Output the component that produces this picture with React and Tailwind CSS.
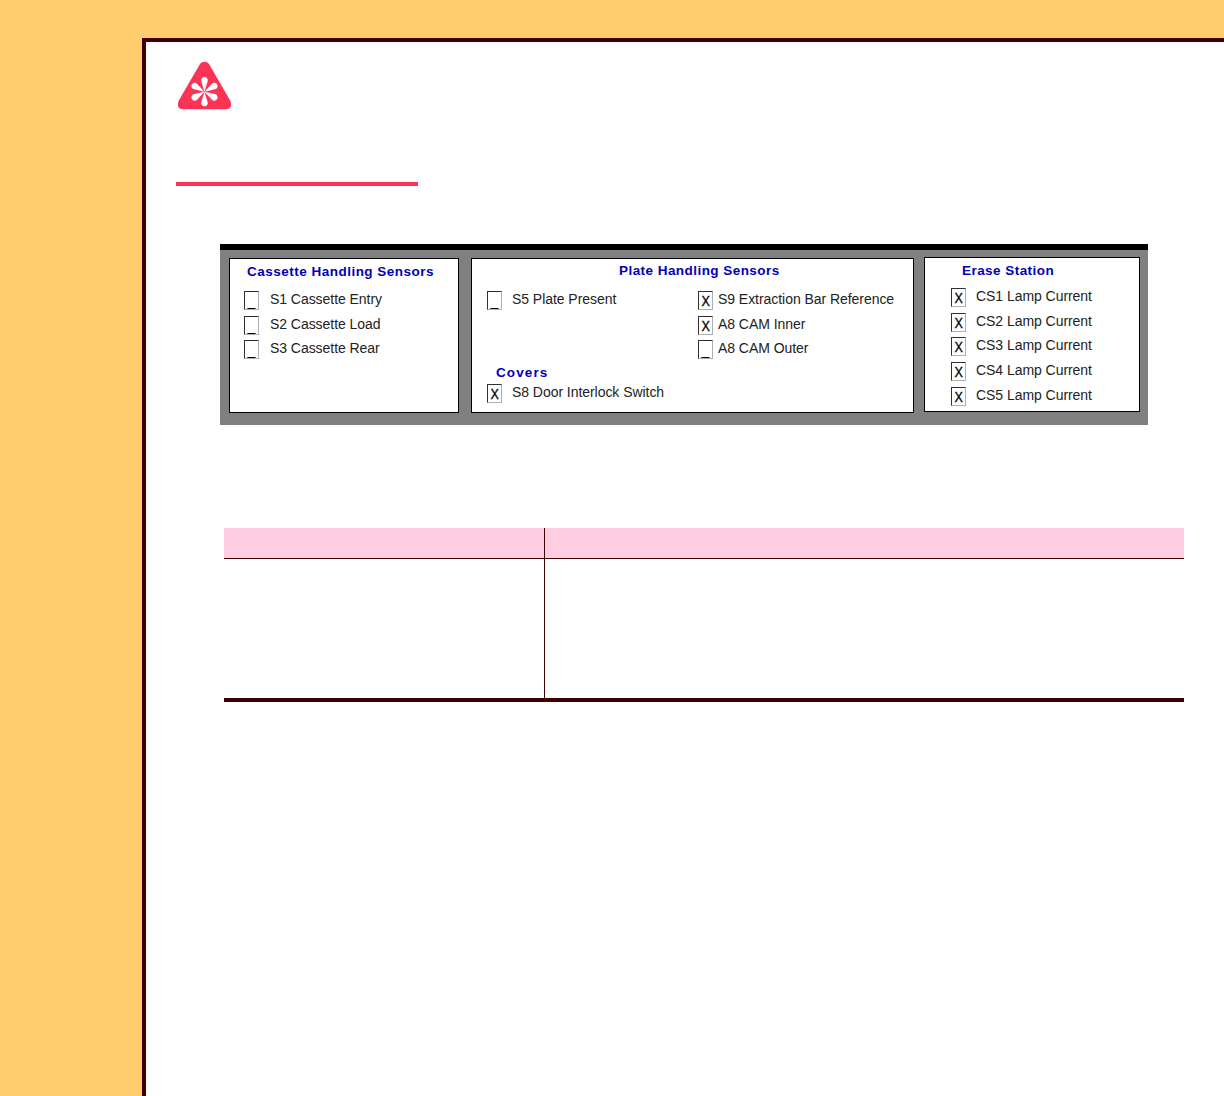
const font = { fontFamily: '"Liberation Sans", Arial, sans-serif' };

function Box({ checked }) {
  return (
    <span className="w-[15px] h-[19px] shrink-0 bg-white border border-t-[#303030] border-l-[#303030] border-r-[#b0b0b0] border-b-[#b0b0b0] flex items-end justify-center text-[14px] leading-[16px] text-black">
      {checked ? <span className="inline-block -translate-y-px scale-x-90 scale-y-110 font-medium [-webkit-text-stroke:0.3px_#000]">X</span> : '_'}
    </span>
  );
}

function Row({ label, checked, h, gap }) {
  return (
    <div className={`flex items-start ${h} ${gap}`}>
      <Box checked={checked} />
      <span className="text-[14px] leading-[16px] text-[#222] tracking-[-0.05px]">{label}</span>
    </div>
  );
}

function Title({ children, className }) {
  return <div className={`font-bold text-[13.5px] leading-[16px] text-[#0000bb] ${className}`}>{children}</div>;
}

function Logo() {
  return (
    <svg width="56" height="50" viewBox="0 0 56 50" className="block">
      <path d="M27.5 0.8 Q30.6 0.8 32.6 4 L53.2 39.5 Q56.4 48.3 48.5 48.3 L6.5 48.3 Q-1.4 48.3 1.8 39.5 L22.4 4 Q24.4 0.8 27.5 0.8 Z" fill="#fb3355" />
      {[0, 60, 120, 180, 240, 300].map((a) => (
        <path key={a} d="M27.5 30.7 L24.4 20.5 A3.3 3.3 0 1 1 30.6 20.5 Z" fill="#fff" transform={`rotate(${a} 27.5 30.7)`} />
      ))}
    </svg>
  );
}

export default function App() {
  return (
    <div style={font} className="w-[1224px] h-[1096px] overflow-hidden bg-[#ffcc6e] pt-[38px] pl-[142px]">
      <div className="h-full bg-white border-t-4 border-l-4 border-[#400000]">
        <div className="pt-[19px] pl-[31px]"><Logo /></div>
        <div className="mt-[71px] ml-[30px] w-[242px] h-1 bg-[#fb3355]" />

        <div className="mt-[58px] ml-[74px] w-[928px] h-[181px] bg-[#808080] border-t-[6px] border-black flex items-start pl-[9px]">
          <div className="mt-2 w-[230px] h-[155px] bg-white border border-black pt-[5px] pl-[14px]">
            <Title className="ml-[3px] mb-[11px] tracking-[0.49px]">Cassette Handling Sensors</Title>
            <Row label="S1 Cassette Entry" h="h-[25px]" gap="gap-[11px]" />
            <Row label="S2 Cassette Load" h="h-[24px]" gap="gap-[11px]" />
            <Row label="S3 Cassette Rear" h="h-[24px]" gap="gap-[11px]" />
          </div>

          <div className="mt-2 ml-3 w-[443px] h-[155px] bg-white border border-black pt-[4px] pl-[15px]">
            <Title className="ml-[132px] mb-[12px] tracking-[0.45px]">Plate Handling Sensors</Title>
            <div className="flex">
              <div className="w-[211px]">
                <Row label="S5 Plate Present" h="h-[25px]" gap="gap-[10px]" />
              </div>
              <div>
                <Row label="S9 Extraction Bar Reference" checked h="h-[25px]" gap="gap-[5px]" />
                <Row label="A8 CAM Inner" checked h="h-[24px]" gap="gap-[5px]" />
                <Row label="A8 CAM Outer" h="h-[24px]" gap="gap-[5px]" />
              </div>
            </div>
            <Title className="ml-[9px] mt-[1px] mb-[3px] tracking-[1.1px]">Covers</Title>
            <Row label="S8 Door Interlock Switch" checked h="h-[20px]" gap="gap-[10px]" />
          </div>

          <div className="mt-[7px] ml-[10px] w-[216px] h-[155px] bg-white border border-black pt-[5px] pl-[26px]">
            <Title className="ml-[11px] mb-[9px] tracking-[0.45px]">Erase Station</Title>
            <Row label="CS1 Lamp Current" checked h="h-[25px]" gap="gap-[10px]" />
            <Row label="CS2 Lamp Current" checked h="h-[24px]" gap="gap-[10px]" />
            <Row label="CS3 Lamp Current" checked h="h-[25px]" gap="gap-[10px]" />
            <Row label="CS4 Lamp Current" checked h="h-[25px]" gap="gap-[10px]" />
            <Row label="CS5 Lamp Current" checked h="h-[20px]" gap="gap-[10px]" />
          </div>
        </div>

        <div className="mt-[103px] ml-[78px] w-[960px] border-b-4 border-[#400000]">
          <div className="flex h-[31px] bg-[#ffcce0] border-b border-[#400000]">
            <div className="w-[321px] border-r border-[#400000]" />
          </div>
          <div className="h-[139px]">
            <div className="w-[321px] h-full border-r border-[#400000]" />
          </div>
        </div>
      </div>
    </div>
  );
}
